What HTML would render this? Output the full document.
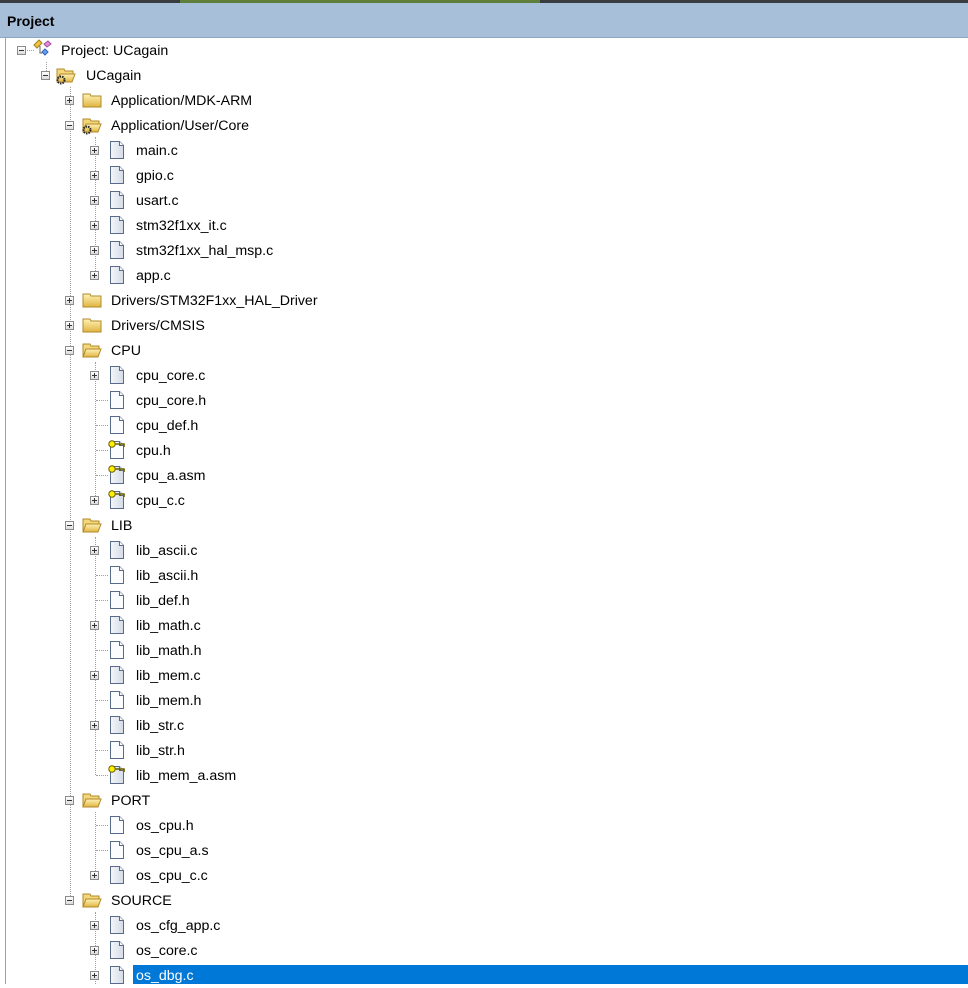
<!DOCTYPE html>
<html><head><meta charset="utf-8">
<style>
*{margin:0;padding:0;box-sizing:border-box}
body{width:968px;height:984px;overflow:hidden;background:#fff;font-family:"Liberation Sans",sans-serif;font-size:14.2px;color:#000;position:relative}
.top{position:absolute;left:0;top:0;width:968px;height:3px;background:#3a3d40}
.top i{position:absolute;left:180px;top:0;width:360px;height:3px;background:#5f7e3a}
.hdr{position:absolute;left:0;top:3px;width:968px;height:35px;background:#a8bfd9;border-bottom:1px solid #8ea6c2}
.hdr b{position:absolute;left:7px;top:10px;font-size:14px}
.lb{position:absolute;left:5px;top:38px;width:1px;height:946px;background:#a0a0a0}
.r{position:absolute;height:25px;left:0;width:968px}
.t{position:absolute;top:5px;white-space:nowrap}
.bx{position:absolute;top:8px;width:9px;height:9px;border:1px solid #8c8c8c;background:linear-gradient(#fff,#dcdcdc);}
.bx:before{content:"";position:absolute;left:1px;top:3px;width:5px;height:1px;background:#333}
.bx.p:after{content:"";position:absolute;left:3px;top:1px;width:1px;height:5px;background:#333}
.v{position:absolute;width:0;border-left:1px dotted #a0a0a0}
.h{position:absolute;height:0;border-top:1px dotted #a0a0a0;top:12px}
svg.ic{position:absolute;top:2px}
.sel{position:absolute;left:133px;top:965px;width:835px;height:19px;background:#0078d7}
</style></head><body>
<svg width="0" height="0" style="position:absolute">
<defs>
<linearGradient id="fg" x1="0" y1="0" x2="0" y2="1"><stop offset="0" stop-color="#fff3b8"/><stop offset="1" stop-color="#e0b440"/></linearGradient>
<linearGradient id="pg" x1="0" y1="0" x2="1" y2="0"><stop offset="0" stop-color="#f4f6fa"/><stop offset="1" stop-color="#d5dbe6"/></linearGradient>
<symbol id="fc" viewBox="0 0 20 20"><path d="M1 4h7l1 2h10v11H1z" fill="url(#fg)" stroke="#b08a2a"/></symbol>
<symbol id="fo" viewBox="0 0 20 20"><path d="M1 4h7l1 2h8v3H4L1 17z" fill="#f3d77a" stroke="#b08a2a"/><path d="M4 9h15l-3 8H1z" fill="url(#fg)" stroke="#b08a2a"/></symbol>
<symbol id="fl" viewBox="0 0 20 20"><path d="M3.5 1.5h9l4 4v13h-13z" fill="url(#pg)" stroke="#5a6a8a"/><path d="M12.5 1.5v4h4" fill="#fff" stroke="#5a6a8a"/></symbol>
<symbol id="fw" viewBox="0 0 20 20"><path d="M3.5 1.5h9l4 4v13h-13z" fill="#fbfcfe" stroke="#5a6a8a"/><path d="M12.5 1.5v4h4" fill="#fff" stroke="#5a6a8a"/></symbol>
<symbol id="ky" viewBox="0 0 20 20"><circle cx="5" cy="4" r="3.2" fill="#ffef00" stroke="#6a6000"/><path d="M8 4h9v3M13 4v2" stroke="#6a6000" stroke-width="1.6" fill="none"/></symbol>
<symbol id="gr" viewBox="0 0 20 20"><circle cx="5" cy="15" r="3.5" fill="none" stroke="#222" stroke-width="2" stroke-dasharray="1.5 1"/></symbol>
<symbol id="pj" viewBox="0 0 20 20"><path d="M2 6l5-5 3 3-5 5z" fill="#f2c43a" stroke="#a08020"/><path d="M12 5l4-3 3 3-4 3z" fill="#e68ad8" stroke="#a050a0"/><path d="M10 13l3-3 3 3-3 3z" fill="#6aa0f0" stroke="#3060b0"/><path d="M8 7v7h2" fill="none" stroke="#666"/></symbol>
</defs></svg>
<div class="top"><i></i></div>
<div class="hdr"><b>Project</b></div>
<div class="lb"></div>

<div class="v" style="left:46px;top:62px;height:13px"></div>
<div class="v" style="left:70px;top:87px;height:813px"></div>
<div class="v" style="left:95px;top:137px;height:138px"></div>
<div class="v" style="left:95px;top:362px;height:138px"></div>
<div class="v" style="left:95px;top:537px;height:238px"></div>
<div class="v" style="left:95px;top:812px;height:63px"></div>
<div class="v" style="left:95px;top:912px;height:72px"></div>

<div class="r" style="top:38px"><div class="bx" style="left:17px"></div><div class="h" style="left:27px;width:7px"></div><svg class="ic" style="left:32px;top:1px" width="20" height="20"><use href="#pj"/></svg><span class="t" style="left:61px">Project: UCagain</span></div>
<div class="r" style="top:63px"><div class="bx" style="left:41px"></div><svg class="ic" style="left:56px" width="20" height="20"><use href="#fo"/><use href="#gr"/></svg><span class="t" style="left:86px">UCagain</span></div>
<div class="r" style="top:88px"><div class="bx p" style="left:65px"></div><svg class="ic" style="left:82px" width="20" height="20"><use href="#fc"/></svg><span class="t" style="left:111px">Application/MDK-ARM</span></div>
<div class="r" style="top:113px"><div class="bx" style="left:65px"></div><svg class="ic" style="left:82px" width="20" height="20"><use href="#fo"/><use href="#gr"/></svg><span class="t" style="left:111px">Application/User/Core</span></div>
<div class="r" style="top:138px"><div class="bx p" style="left:90px"></div><svg class="ic" style="left:107px" width="20" height="20"><use href="#fl"/></svg><span class="t" style="left:136px">main.c</span></div>
<div class="r" style="top:163px"><div class="bx p" style="left:90px"></div><svg class="ic" style="left:107px" width="20" height="20"><use href="#fl"/></svg><span class="t" style="left:136px">gpio.c</span></div>
<div class="r" style="top:188px"><div class="bx p" style="left:90px"></div><svg class="ic" style="left:107px" width="20" height="20"><use href="#fl"/></svg><span class="t" style="left:136px">usart.c</span></div>
<div class="r" style="top:213px"><div class="bx p" style="left:90px"></div><svg class="ic" style="left:107px" width="20" height="20"><use href="#fl"/></svg><span class="t" style="left:136px">stm32f1xx_it.c</span></div>
<div class="r" style="top:238px"><div class="bx p" style="left:90px"></div><svg class="ic" style="left:107px" width="20" height="20"><use href="#fl"/></svg><span class="t" style="left:136px">stm32f1xx_hal_msp.c</span></div>
<div class="r" style="top:263px"><div class="bx p" style="left:90px"></div><svg class="ic" style="left:107px" width="20" height="20"><use href="#fl"/></svg><span class="t" style="left:136px">app.c</span></div>
<div class="r" style="top:288px"><div class="bx p" style="left:65px"></div><svg class="ic" style="left:82px" width="20" height="20"><use href="#fc"/></svg><span class="t" style="left:111px">Drivers/STM32F1xx_HAL_Driver</span></div>
<div class="r" style="top:313px"><div class="bx p" style="left:65px"></div><svg class="ic" style="left:82px" width="20" height="20"><use href="#fc"/></svg><span class="t" style="left:111px">Drivers/CMSIS</span></div>
<div class="r" style="top:338px"><div class="bx" style="left:65px"></div><svg class="ic" style="left:82px" width="20" height="20"><use href="#fo"/></svg><span class="t" style="left:111px">CPU</span></div>
<div class="r" style="top:363px"><div class="bx p" style="left:90px"></div><svg class="ic" style="left:107px" width="20" height="20"><use href="#fl"/></svg><span class="t" style="left:136px">cpu_core.c</span></div>
<div class="r" style="top:388px"><div class="h" style="left:96px;width:12px"></div><svg class="ic" style="left:107px" width="20" height="20"><use href="#fw"/></svg><span class="t" style="left:136px">cpu_core.h</span></div>
<div class="r" style="top:413px"><div class="h" style="left:96px;width:12px"></div><svg class="ic" style="left:107px" width="20" height="20"><use href="#fw"/></svg><span class="t" style="left:136px">cpu_def.h</span></div>
<div class="r" style="top:438px"><div class="h" style="left:96px;width:12px"></div><svg class="ic" style="left:107px" width="20" height="20"><use href="#fw"/><use href="#ky"/></svg><span class="t" style="left:136px">cpu.h</span></div>
<div class="r" style="top:463px"><div class="h" style="left:96px;width:12px"></div><svg class="ic" style="left:107px" width="20" height="20"><use href="#fl"/><use href="#ky"/></svg><span class="t" style="left:136px">cpu_a.asm</span></div>
<div class="r" style="top:488px"><div class="bx p" style="left:90px"></div><svg class="ic" style="left:107px" width="20" height="20"><use href="#fl"/><use href="#ky"/></svg><span class="t" style="left:136px">cpu_c.c</span></div>
<div class="r" style="top:513px"><div class="bx" style="left:65px"></div><svg class="ic" style="left:82px" width="20" height="20"><use href="#fo"/></svg><span class="t" style="left:111px">LIB</span></div>
<div class="r" style="top:538px"><div class="bx p" style="left:90px"></div><svg class="ic" style="left:107px" width="20" height="20"><use href="#fl"/></svg><span class="t" style="left:136px">lib_ascii.c</span></div>
<div class="r" style="top:563px"><div class="h" style="left:96px;width:12px"></div><svg class="ic" style="left:107px" width="20" height="20"><use href="#fw"/></svg><span class="t" style="left:136px">lib_ascii.h</span></div>
<div class="r" style="top:588px"><div class="h" style="left:96px;width:12px"></div><svg class="ic" style="left:107px" width="20" height="20"><use href="#fw"/></svg><span class="t" style="left:136px">lib_def.h</span></div>
<div class="r" style="top:613px"><div class="bx p" style="left:90px"></div><svg class="ic" style="left:107px" width="20" height="20"><use href="#fl"/></svg><span class="t" style="left:136px">lib_math.c</span></div>
<div class="r" style="top:638px"><div class="h" style="left:96px;width:12px"></div><svg class="ic" style="left:107px" width="20" height="20"><use href="#fw"/></svg><span class="t" style="left:136px">lib_math.h</span></div>
<div class="r" style="top:663px"><div class="bx p" style="left:90px"></div><svg class="ic" style="left:107px" width="20" height="20"><use href="#fl"/></svg><span class="t" style="left:136px">lib_mem.c</span></div>
<div class="r" style="top:688px"><div class="h" style="left:96px;width:12px"></div><svg class="ic" style="left:107px" width="20" height="20"><use href="#fw"/></svg><span class="t" style="left:136px">lib_mem.h</span></div>
<div class="r" style="top:713px"><div class="bx p" style="left:90px"></div><svg class="ic" style="left:107px" width="20" height="20"><use href="#fl"/></svg><span class="t" style="left:136px">lib_str.c</span></div>
<div class="r" style="top:738px"><div class="h" style="left:96px;width:12px"></div><svg class="ic" style="left:107px" width="20" height="20"><use href="#fw"/></svg><span class="t" style="left:136px">lib_str.h</span></div>
<div class="r" style="top:763px"><div class="h" style="left:96px;width:12px"></div><svg class="ic" style="left:107px" width="20" height="20"><use href="#fl"/><use href="#ky"/></svg><span class="t" style="left:136px">lib_mem_a.asm</span></div>
<div class="r" style="top:788px"><div class="bx" style="left:65px"></div><svg class="ic" style="left:82px" width="20" height="20"><use href="#fo"/></svg><span class="t" style="left:111px">PORT</span></div>
<div class="r" style="top:813px"><div class="h" style="left:96px;width:12px"></div><svg class="ic" style="left:107px" width="20" height="20"><use href="#fw"/></svg><span class="t" style="left:136px">os_cpu.h</span></div>
<div class="r" style="top:838px"><div class="h" style="left:96px;width:12px"></div><svg class="ic" style="left:107px" width="20" height="20"><use href="#fw"/></svg><span class="t" style="left:136px">os_cpu_a.s</span></div>
<div class="r" style="top:863px"><div class="bx p" style="left:90px"></div><svg class="ic" style="left:107px" width="20" height="20"><use href="#fl"/></svg><span class="t" style="left:136px">os_cpu_c.c</span></div>
<div class="r" style="top:888px"><div class="bx" style="left:65px"></div><svg class="ic" style="left:82px" width="20" height="20"><use href="#fo"/></svg><span class="t" style="left:111px">SOURCE</span></div>
<div class="r" style="top:913px"><div class="bx p" style="left:90px"></div><svg class="ic" style="left:107px" width="20" height="20"><use href="#fl"/></svg><span class="t" style="left:136px">os_cfg_app.c</span></div>
<div class="r" style="top:938px"><div class="bx p" style="left:90px"></div><svg class="ic" style="left:107px" width="20" height="20"><use href="#fl"/></svg><span class="t" style="left:136px">os_core.c</span></div>
<div class="sel"></div>
<div class="r" style="top:963px"><div class="bx p" style="left:90px"></div><svg class="ic" style="left:107px" width="20" height="20"><use href="#fl"/></svg><span class="t" style="left:136px;color:#fff">os_dbg.c</span></div>
</body></html>
